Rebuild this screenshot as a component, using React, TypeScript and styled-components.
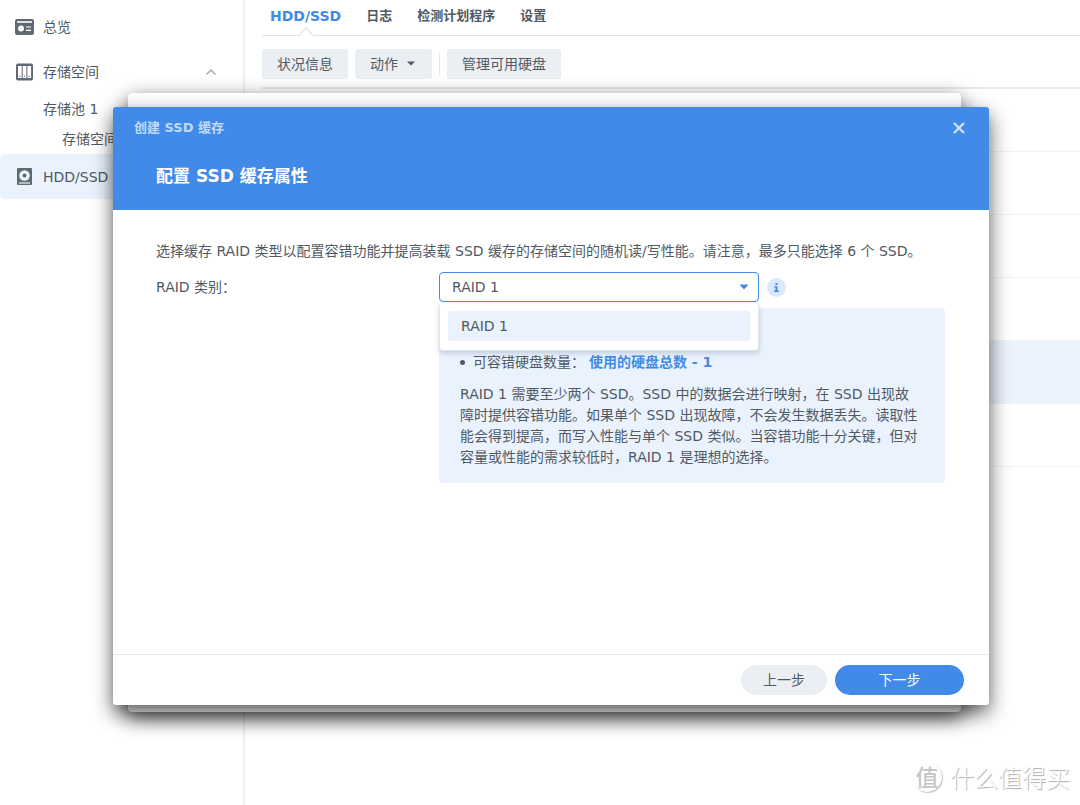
import React from "react";
import styled, { createGlobalStyle } from "styled-components";

const GlobalStyle = createGlobalStyle`
  * { box-sizing: border-box; }
  body {
    margin: 0;
    background: #fff;
    color: #505a64;
    font: 14px/20px "DejaVu Sans", "Noto Sans CJK SC", sans-serif;
  }
  button, select { font: inherit; color: inherit; }
  button { border: 0; padding: 0; cursor: pointer; }
`;

const Page = styled.div`
  position: relative;
  display: flex;
  min-height: 100vh;
  overflow: hidden;
`;

const Sidebar = styled.nav`
  flex: none;
  width: 245px;
  padding-top: 4px;
  border-right: 2px solid #edf2f8;
`;

const NavItem = styled.a<{ $active?: boolean }>`
  display: flex;
  align-items: center;
  gap: 9px;
  height: 45px;
  padding: 0 26px 0 15px;
  color: inherit;
  text-decoration: none;
  border-radius: 6px;
  background: ${(p) => (p.$active ? "#eaf2fd" : "transparent")};
  svg { flex: none; }
`;

const NavLabel = styled.span`
  flex: 1;
`;

const SubItem = styled.a<{ $level: number }>`
  display: block;
  height: 30px;
  line-height: 30px;
  padding-left: ${(p) => (p.$level === 1 ? 43 : 62)}px;
  color: inherit;
  text-decoration: none;
`;

const Main = styled.main`
  flex: 1;
  min-width: 0;
  padding-left: 17px;
`;

const Tabs = styled.nav`
  display: flex;
  gap: 25px;
  height: 36px;
  padding: 6px 8px 0;
  border-bottom: 1px solid #dde4ec;
`;

const Tab = styled.a<{ $active?: boolean }>`
  position: relative;
  font-size: ${(p) => (p.$active ? 14 : 13)}px;
  font-weight: 700;
  color: ${(p) => (p.$active ? "#418be8" : "#505a64")};
  text-decoration: none;
`;

const TabNotch = styled.svg`
  position: absolute;
  left: calc(50% - 8px);
  bottom: -1px;
`;

const Toolbar = styled.div`
  display: flex;
  align-items: center;
  gap: 7px;
  height: 53px;
  padding-top: 4px;
  border-bottom: 2px solid #e6ebf1;
`;

const ToolButton = styled.button`
  display: flex;
  align-items: center;
  gap: 7px;
  height: 30px;
  padding: 0 15px;
  border-radius: 3px;
  background: #ebeef3;
`;

const Divider = styled.span`
  width: 1px;
  height: 22px;
  background: #dfe5ec;
`;

const DiskRow = styled.div<{ $selected?: boolean }>`
  height: 63px;
  border-bottom: 1px solid #eef1f5;
  background: ${(p) => (p.$selected ? "#eaf2fd" : "transparent")};
`;

const Overlay = styled.div`
  position: absolute;
  inset: 0;
  display: flex;
  padding: 107px 91px 100px 113px;
`;

const DialogFrame = styled.div`
  position: relative;
  flex: 1;
  display: flex;
`;

const BackSheet = styled.div`
  position: absolute;
  inset: -14px 28px -7px 15px;
  border-radius: 4px;
  background: #fff;
  box-shadow: 0 6px 20px rgba(0, 0, 0, 0.65);
`;

const Dialog = styled.section`
  position: relative;
  flex: 1;
  display: flex;
  flex-direction: column;
  border-radius: 3px;
  background: #fff;
  box-shadow: 0 8px 20px rgba(0, 0, 0, 0.65);
`;

const DialogHeader = styled.header`
  height: 103px;
  padding: 11px 22px 0 21px;
  border-radius: 3px 3px 0 0;
  background: #428ae7;
  color: #fff;
`;

const TitleBar = styled.div`
  display: flex;
  justify-content: space-between;
  align-items: center;
  font-size: 13px;
  font-weight: 700;
  color: #c0daf9;
`;

const CloseButton = styled.button`
  display: flex;
  background: none;
`;

const DialogTitle = styled.h1`
  margin: 26px 0 0 22px;
  font-size: 17px;
  line-height: 24px;
`;

const DialogBody = styled.div`
  flex: 1;
  padding: 31px 44px 0 43px;
`;

const Intro = styled.p`
  margin: 0 0 11px;
`;

const Field = styled.div`
  display: grid;
  grid-template-columns: 283px 1fr;
`;

const FieldLabel = styled.label`
  line-height: 30px;
`;

const FieldRow = styled.div`
  display: flex;
  align-items: center;
  gap: 8px;
`;

const SelectBox = styled.div`
  position: relative;
  width: 320px;
`;

const Select = styled.select`
  display: block;
  appearance: none;
  width: 100%;
  height: 30px;
  padding: 0 12px;
  border: 1px solid #418be8;
  border-radius: 4px;
  background: #fff;
  outline: none;
`;

const SelectArrow = styled.svg`
  position: absolute;
  right: 10px;
  top: 12px;
  pointer-events: none;
`;

const Menu = styled.div`
  position: absolute;
  z-index: 1;
  top: 31px;
  left: 0;
  right: 0;
  padding: 8px 8px 9px;
  border: 1px solid #dfe5ec;
  border-top: 0;
  border-radius: 4px;
  background: #fff;
  box-shadow: 0 2px 5px rgba(60, 80, 110, 0.25);
`;

const MenuOption = styled.button`
  display: block;
  width: 100%;
  height: 30px;
  padding: 0 13px;
  border-radius: 3px;
  background: #eaf2fd;
  text-align: left;
`;

const InfoButton = styled.button`
  display: flex;
  align-items: center;
  justify-content: center;
  width: 19px;
  height: 19px;
  border-radius: 50%;
  background: #dce9fb;
`;

const InfoPanel = styled.div`
  grid-column: 2;
  margin-top: 6px;
  padding: 43px 24px 15px 21px;
  border-radius: 4px;
  background: #eaf2fd;
`;

const Facts = styled.ul`
  margin: 0;
  padding: 0;
  list-style: none;
`;

const Fact = styled.li`
  display: flex;
  align-items: center;
  height: 22px;
  &::before {
    content: "";
    width: 5px;
    height: 5px;
    margin-right: 8px;
    border-radius: 50%;
    background: #505a64;
  }
  strong { margin-left: 4px; color: #418be8; }
`;

const Description = styled.p`
  margin: 11px 0 0;
  line-height: 21px;
`;

const DialogFooter = styled.footer`
  display: flex;
  justify-content: flex-end;
  gap: 8px;
  height: 51px;
  padding: 10px 25px 0;
  border-top: 1px solid #e3eaf2;
`;

const FooterButton = styled.button<{ $primary?: boolean }>`
  width: ${(p) => (p.$primary ? 129 : 86)}px;
  height: 30px;
  border-radius: 15px;
  background: ${(p) => (p.$primary ? "#428ae7" : "#ebeef3")};
  color: ${(p) => (p.$primary ? "#fff" : "#505a64")};
`;

const Watermark = styled.div`
  position: absolute;
  right: 10px;
  bottom: 12px;
  display: flex;
  align-items: center;
  gap: 8px;
  font: 300 24px/32px "Noto Sans CJK SC", sans-serif;
  color: #fff;
  text-shadow: 1px 1px 1px #a8a8a8;
`;

const WatermarkSeal = styled.span`
  width: 30px;
  height: 30px;
  border-radius: 50%;
  box-shadow: 1px 1px 1px #c0c0c0;
  color: #c6c6c6;
  font-size: 23px;
  font-weight: 500;
  line-height: 28px;
  text-align: center;
  text-shadow: none;
`;

const OverviewIcon = () => (
  <svg width="19" height="18" viewBox="0 0 19 18">
    <rect y="1" width="19" height="16" rx="2" fill="#5f6973" />
    <path d="M2 4h15" stroke="#fff" strokeWidth="1.600" />
    <path d="M11 9h5M11 12.300h5" stroke="#fff" strokeWidth="1.200" />
    <circle cx="6" cy="10.500" r="3" fill="#fff" />
  </svg>
);

const StorageIcon = () => (
  <svg width="19" height="18" viewBox="0 0 19 18">
    <rect x="1" y="0.500" width="17" height="17" rx="2" fill="#5f6973" />
    <path d="M3 3h3.700v12H3zM7.700 3h3.700v12H7.700zM12.400 3h3.700v12h-3.700z" fill="#fff" />
    <path d="M4.200 13.300h1.300M8.900 13.300h1.300M13.600 13.300h1.300" stroke="#5f6973" />
  </svg>
);

const DiskIcon = () => (
  <svg width="19" height="18" viewBox="0 0 19 18">
    <rect x="2" y="0" width="15" height="17" rx="1" fill="#5f6973" />
    <circle cx="9.500" cy="7.500" r="5.300" fill="#eaf2fd" />
    <circle cx="9.500" cy="7.500" r="1.900" fill="#5f6973" />
    <path d="M4 15h11" stroke="#eaf2fd" strokeWidth="1.200" />
  </svg>
);

export default function App() {
  return (
    <Page>
      <GlobalStyle />
      <Sidebar>
        <NavItem href="#overview"><OverviewIcon /><NavLabel>总览</NavLabel></NavItem>
        <NavItem href="#storage">
          <StorageIcon />
          <NavLabel>存储空间</NavLabel>
          <svg width="12" height="8" viewBox="0 0 12 8">
            <path d="M1.500 6.500 6 2l4.500 4.500" fill="none" stroke="#a4abb3" strokeWidth="1.500" />
          </svg>
        </NavItem>
        <SubItem href="#pool" $level={1}>存储池 1</SubItem>
        <SubItem href="#volume" $level={2}>存储空间 1</SubItem>
        <NavItem href="#disks" $active><DiskIcon /><NavLabel>HDD/SSD</NavLabel></NavItem>
      </Sidebar>

      <Main>
        <Tabs>
          <Tab href="#hdd" $active>
            HDD/SSD
            <TabNotch width="16" height="10" viewBox="0 0 16 10">
              <path d="M1 9 8 2 15 9v1H1z" fill="#fff" />
              <path d="M0 9.500h1L8 2 15 9.500h1" fill="none" stroke="#dde4ec" strokeWidth="1.200" />
            </TabNotch>
          </Tab>
          <Tab href="#log">日志</Tab>
          <Tab href="#schedule">检测计划程序</Tab>
          <Tab href="#settings">设置</Tab>
        </Tabs>
        <Toolbar>
          <ToolButton>状况信息</ToolButton>
          <ToolButton>
            动作
            <svg width="12" height="5" viewBox="0 0 12 5"><path d="M2 0.500h8L6 4.500z" fill="#505a64" /></svg>
          </ToolButton>
          <Divider />
          <ToolButton>管理可用硬盘</ToolButton>
        </Toolbar>
        <DiskRow />
        <DiskRow />
        <DiskRow />
        <DiskRow />
        <DiskRow $selected />
        <DiskRow />
      </Main>

      <Overlay>
        <DialogFrame>
          <BackSheet />
          <Dialog role="dialog" aria-labelledby="dialog-title">
            <DialogHeader>
              <TitleBar>
                创建 SSD 缓存
                <CloseButton aria-label="关闭">
                  <svg width="16" height="16" viewBox="0 0 16 16">
                    <path d="M3 3l10 10M13 3l-10 10" stroke="#cfe2fa" strokeWidth="2.200" />
                  </svg>
                </CloseButton>
              </TitleBar>
              <DialogTitle id="dialog-title">配置 SSD 缓存属性</DialogTitle>
            </DialogHeader>
            <DialogBody>
              <Intro>选择缓存 RAID 类型以配置容错功能并提高装载 SSD 缓存的存储空间的随机读/写性能。请注意，最多只能选择 6 个 SSD。</Intro>
              <Field>
                <FieldLabel htmlFor="raid-type">RAID 类别：</FieldLabel>
                <FieldRow>
                  <SelectBox>
                    <Select id="raid-type"><option>RAID 1</option></Select>
                    <SelectArrow width="10" height="6" viewBox="0 0 10 6">
                      <path d="M0.500 0.500h9L5 5.500z" fill="#418be8" />
                    </SelectArrow>
                    <Menu role="listbox">
                      <MenuOption role="option" aria-selected>RAID 1</MenuOption>
                    </Menu>
                  </SelectBox>
                  <InfoButton aria-label="说明">
                    <svg width="7" height="9" viewBox="0 0 7 9">
                      <path d="M2.500 0h2v2h-2zM1.200 3.200h3.300v4.300h1.300V9H1V7.500h1.500V4.500H1.200z" fill="#418be8" />
                    </svg>
                  </InfoButton>
                </FieldRow>
                <InfoPanel>
                  <Facts>
                    <Fact>可容错硬盘数量：<strong>使用的硬盘总数 - 1</strong></Fact>
                  </Facts>
                  <Description>
                    RAID 1 需要至少两个 SSD。SSD 中的数据会进行映射，在 SSD 出现故障时提供容错功能。如果单个 SSD 出现故障，不会发生数据丢失。读取性能会得到提高，而写入性能与单个 SSD 类似。当容错功能十分关键，但对容量或性能的需求较低时，RAID 1 是理想的选择。
                  </Description>
                </InfoPanel>
              </Field>
            </DialogBody>
            <DialogFooter>
              <FooterButton>上一步</FooterButton>
              <FooterButton $primary>下一步</FooterButton>
            </DialogFooter>
          </Dialog>
        </DialogFrame>
      </Overlay>

      <Watermark><WatermarkSeal>值</WatermarkSeal>什么值得买</Watermark>
    </Page>
  );
}
